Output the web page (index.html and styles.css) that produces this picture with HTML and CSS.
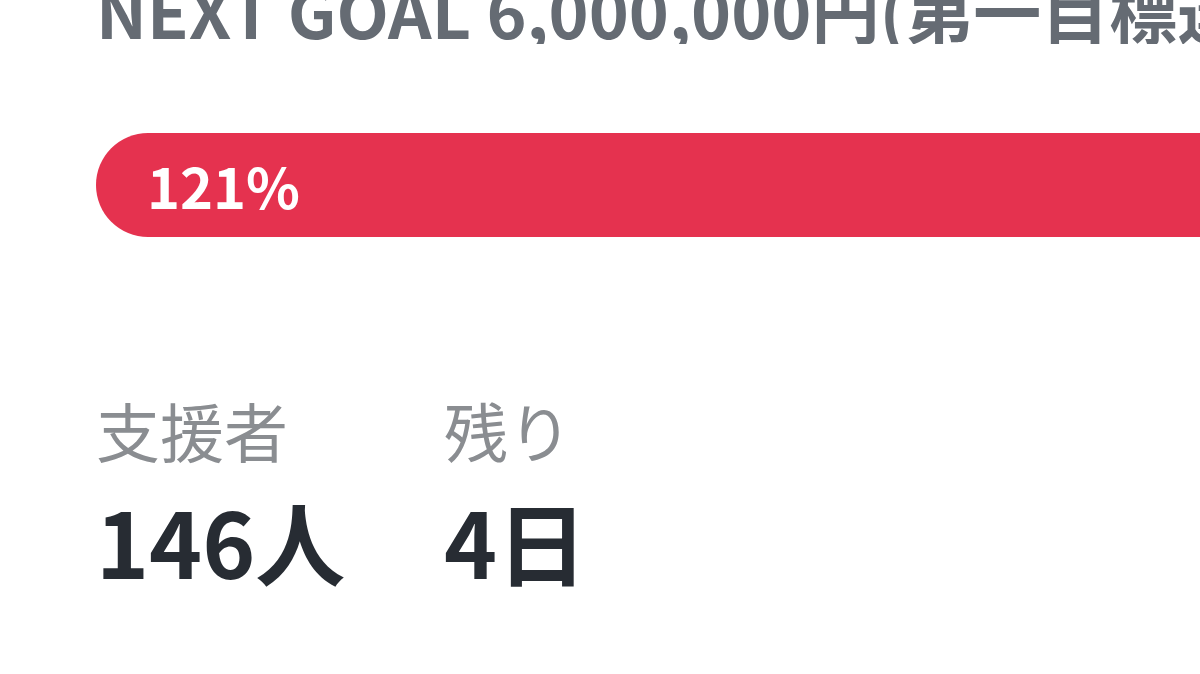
FILE: index.html
```html
<!DOCTYPE html>
<html lang="ja">
<head>
<meta charset="utf-8">
<link rel="stylesheet" href="styles.css">
</head>
<body>
<div class="panel">
  <div class="goal">NEXT GOAL 6,000,000円(第一目標達成</div>
  <div class="bar"><span class="pct">121%</span></div>
  <div class="stats">
    <div class="stat">
      <div class="label">支援者</div>
      <div class="value">146人</div>
    </div>
    <div class="stat">
      <div class="label">残り</div>
      <div class="value">4日</div>
    </div>
  </div>
</div>
</body>
</html>
```
FILE: styles.css
```css
html, body {
  margin: 0;
  padding: 0;
  background: #ffffff;
  overflow: hidden;
  width: 1200px;
  height: 674px;
}
.panel {
  font-family: "Noto Sans CJK JP", "Noto Sans", sans-serif;
  padding-left: 96px;
}
.goal {
  margin-top: -24px;
  font-size: 68px;
  font-weight: 700;
  line-height: 1;
  color: #656b73;
  white-space: nowrap;
  overflow: hidden;
}
.bar {
  margin-top: 89px;
  height: 104px;
  width: 1200px;
  background: #e5324f;
  border-radius: 52px 0 0 52px;
  display: flex;
  align-items: center;
  padding-left: 51px;
}
.pct {
  color: #ffffff;
  font-size: 56px;
  font-weight: 700;
  line-height: 1;
}
.stats {
  display: grid;
  grid-template-columns: 348px auto;
  margin-top: 160px;
}
.label {
  font-size: 64px;
  line-height: 1;
  color: #8a8d91;
}
.value {
  margin-top: 34px;
  font-size: 90px;
  font-weight: 700;
  line-height: 1;
  color: #272c33;
}
```
